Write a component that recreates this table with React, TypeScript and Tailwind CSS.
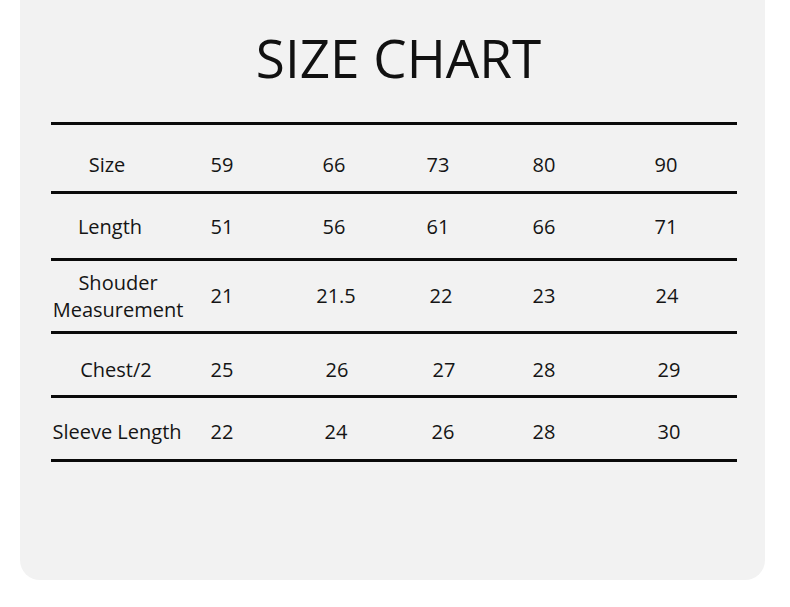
import React from "react";

type Row = {
  label: string[];
  values: string[];
  h: string;   // row height (without rule)
  pad: string; // top padding to place text
  shift?: string;
};

const rows: Row[] = [
  { label: ["Size"], values: ["59", "66", "73", "80", "90"], h: "h-[66px]", pad: "pt-[26px] items-start", shift: "-translate-x-[11px]" },
  { label: ["Length"], values: ["51", "56", "61", "66", "71"], h: "h-[64px]", pad: "pt-[19px] items-start", shift: "-translate-x-[8px]" },
  { label: ["Shouder", "Measurement"], values: ["21", "21.5", "22", "23", "24"], h: "h-[70px]", pad: "items-center" },
  { label: ["Chest/2"], values: ["25", "26", "27", "28", "29"], h: "h-[61px]", pad: "pt-[22px] items-start", shift: "-translate-x-[2px]" },
  { label: ["Sleeve Length"], values: ["22", "24", "26", "28", "30"], h: "h-[61px]", pad: "pt-[20px] items-start", shift: "-translate-x-[1px]" },
];

// value column widths so each number sits on its column centre
const cols = ["w-[74px]", "w-[150px]", "w-[58px]", "w-[154px]", "w-[90px]"];
const nudge = [
  ["", "", "", "", ""],
  ["", "", "", "", ""],
  ["", "translate-x-[2px]", "translate-x-[3px]", "", "translate-x-[1px]"],
  ["", "translate-x-[3px]", "translate-x-[6px]", "", "translate-x-[3px]"],
  ["", "translate-x-[2px]", "translate-x-[5px]", "", "translate-x-[3px]"],
];

function Rule() {
  return <div className="h-[3px] bg-[#0a0a0a]" />;
}

export default function App() {
  return (
    <div className="min-h-[607px] bg-white" style={{ fontFamily: "'Open Sans', 'Noto Sans', sans-serif" }}>
      <div className="ml-[20px] w-[745px] h-[580px] bg-[#f2f2f2] rounded-b-[20px]">
        <div className="pt-[26px] h-[122px] text-center text-[53px] leading-[64px] text-[#111] translate-x-[6px]">
          SIZE CHART
        </div>
        <div className="ml-[31px] w-[686px] text-[20px] text-[#151515]">
          <Rule />
          {rows.map((r, i) => (
            <div key={r.label.join(" ")}>
              <div className={`flex ${r.h} ${r.pad}`}>
                <div className={`w-[134px] text-center leading-[27px] ${r.shift ?? ""}`}>
                  {r.label.map((l) => (
                    <div key={l}>{l}</div>
                  ))}
                </div>
                {r.values.map((v, j) => (
                  <div key={j} className={`${cols[j]} text-center leading-[28px] ${nudge[i][j]}`}>
                    {v}
                  </div>
                ))}
              </div>
              <Rule />
            </div>
          ))}
        </div>
      </div>
    </div>
  );
}
